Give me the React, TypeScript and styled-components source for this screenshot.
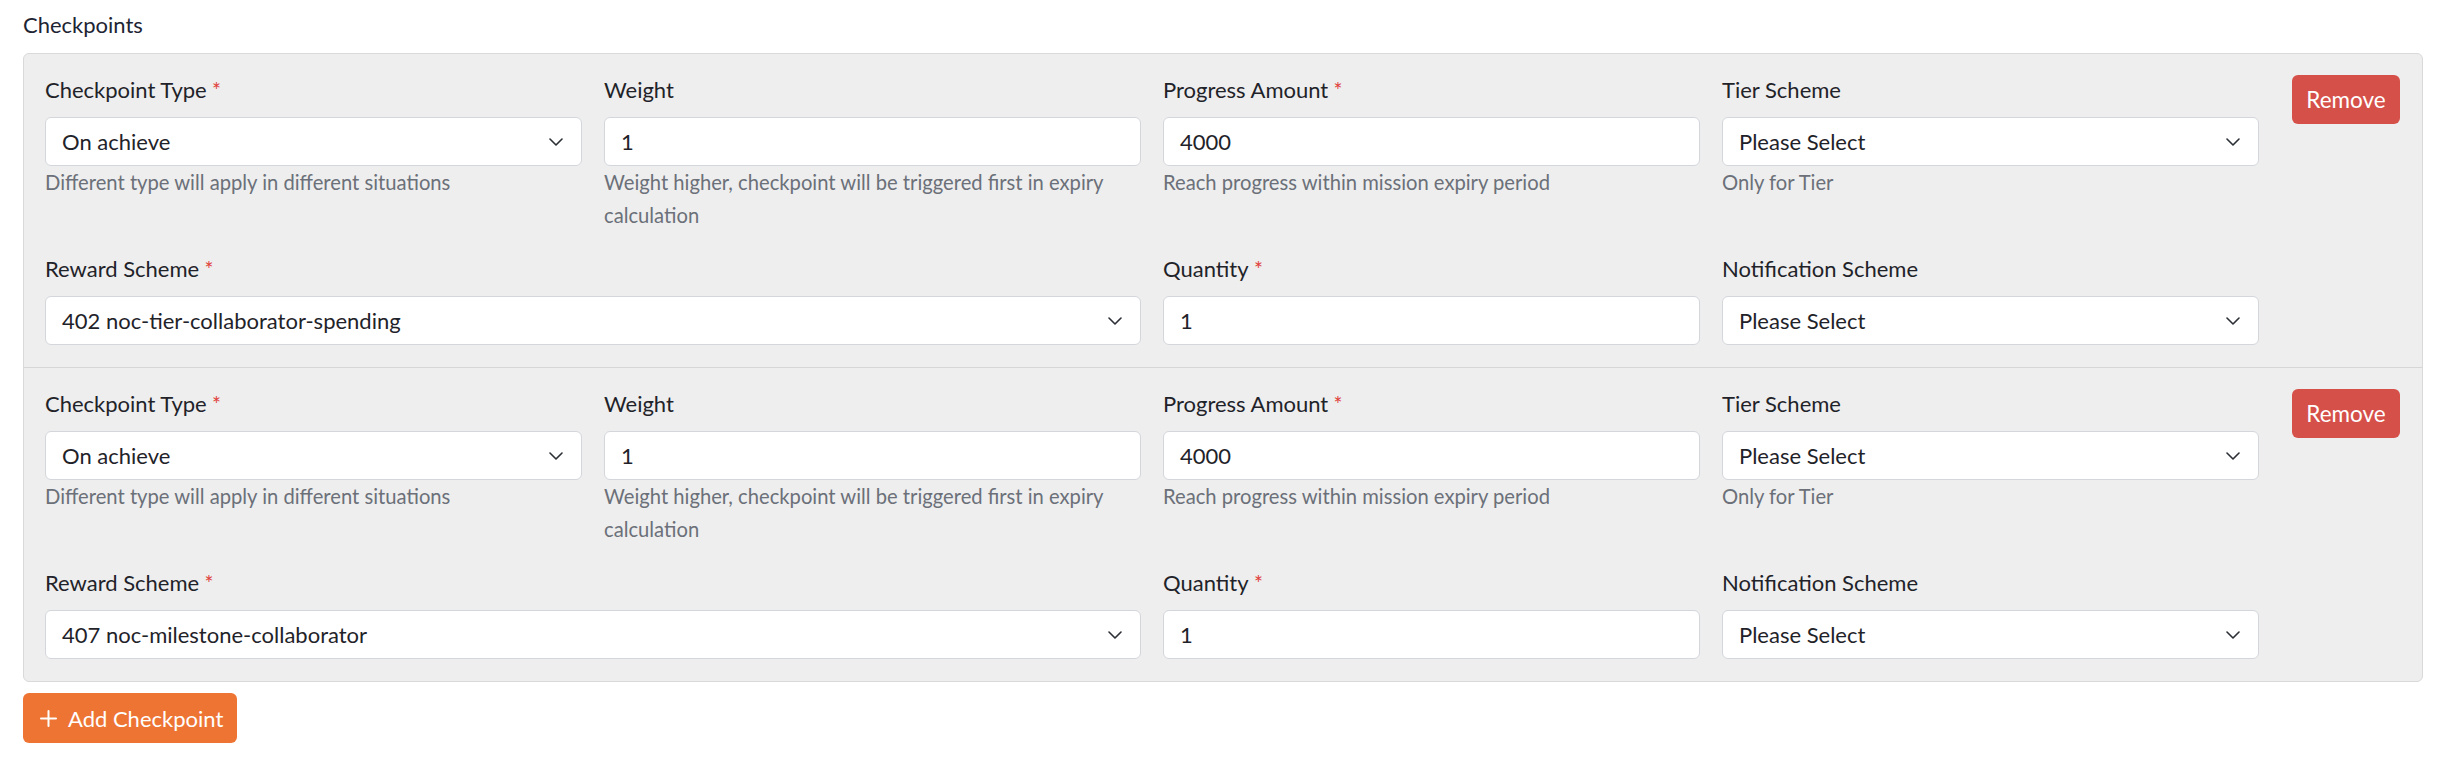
import React from 'react';
import styled, { createGlobalStyle } from 'styled-components';

const GlobalStyle = createGlobalStyle`
    html, body {
        margin: 0;
        padding: 0;
        background: #ffffff;
        font-family: Lato, 'Noto Sans', 'Liberation Sans', sans-serif;
    }
`;

interface Field {
    label: string;
    required?: boolean;
    value: string;
    select?: boolean;
    help?: string;
    span?: number;
}

interface Checkpoint {
    id: number;
    fields: Field[];
}

const checkpoints: Checkpoint[] = [
    {
        id: 1,
        fields: [
            { label: 'Checkpoint Type', required: true, value: 'On achieve', select: true, help: 'Different type will apply in different situations' },
            { label: 'Weight', value: '1', help: 'Weight higher, checkpoint will be triggered first in expiry calculation' },
            { label: 'Progress Amount', required: true, value: '4000', help: 'Reach progress within mission expiry period' },
            { label: 'Tier Scheme', value: 'Please Select', select: true, help: 'Only for Tier' },
            { label: 'Reward Scheme', required: true, value: '402 noc-tier-collaborator-spending', select: true, span: 2 },
            { label: 'Quantity', required: true, value: '1' },
            { label: 'Notification Scheme', value: 'Please Select', select: true },
        ],
    },
    {
        id: 2,
        fields: [
            { label: 'Checkpoint Type', required: true, value: 'On achieve', select: true, help: 'Different type will apply in different situations' },
            { label: 'Weight', value: '1', help: 'Weight higher, checkpoint will be triggered first in expiry calculation' },
            { label: 'Progress Amount', required: true, value: '4000', help: 'Reach progress within mission expiry period' },
            { label: 'Tier Scheme', value: 'Please Select', select: true, help: 'Only for Tier' },
            { label: 'Reward Scheme', required: true, value: '407 noc-milestone-collaborator', select: true, span: 2 },
            { label: 'Quantity', required: true, value: '1' },
            { label: 'Notification Scheme', value: 'Please Select', select: true },
        ],
    },
];

const Page = styled.div`
    padding: 10px 17px 20px 23px;
`;

const Title = styled.div`
    font-size: 22px;
    line-height: 30px;
    color: #1d2433;
    margin-bottom: 13px;
`;

const List = styled.div`
    background: #eeeeee;
    border: 1px solid #d9d9d9;
    border-radius: 6px;
    overflow: hidden;
`;

const Card = styled.div`
    display: flex;
    align-items: flex-start;
    padding: 21px 22px 22px 21px;
    border-bottom: 1px solid #d6d6d6;

    &:last-child {
        border-bottom: none;
    }
`;

const Grid = styled.div`
    flex: 1;
    display: grid;
    grid-template-columns: repeat(4, 1fr);
    column-gap: 22px;
    row-gap: 22px;
`;

const FieldBox = styled.div<{ $span?: number }>`
    display: flex;
    flex-direction: column;
    min-width: 0;
    grid-column: span ${(p) => p.$span || 1};
`;

const Label = styled.label`
    font-size: 22px;
    line-height: 30px;
    color: #1f2329;
    margin-bottom: 12px;

    span {
        color: #e0413a;
        font-size: 21px;
    }
`;

const Control = styled.div`
    height: 49px;
    box-sizing: border-box;
    display: flex;
    align-items: center;
    justify-content: space-between;
    padding: 0 18px 0 16px;
    background: #ffffff;
    border: 1px solid #d3d6db;
    border-radius: 6px;
    font-size: 22px;
    color: #1f2329;
`;

const Help = styled.div`
    font-size: 20.2px;
    line-height: 33px;
    color: #6b7079;
`;

const RemoveButton = styled.button`
    flex: none;
    margin-left: 33px;
    width: 108px;
    height: 49px;
    border: none;
    border-radius: 6px;
    background: #d6504a;
    color: #ffffff;
    font-family: inherit;
    font-size: 22.5px;
    cursor: pointer;
`;

const AddButton = styled.button`
    margin-top: 11px;
    height: 50px;
    display: inline-flex;
    align-items: center;
    gap: 11px;
    padding: 0 14px 0 17px;
    border: none;
    border-radius: 6px;
    background: #ee7433;
    color: #ffffff;
    font-family: inherit;
    font-size: 22px;
    cursor: pointer;
`;

const Chevron = () => (
    <svg width="14" height="8" viewBox="0 0 14 8" fill="none">
        <path d="M1 1l6 6 6-6" stroke="#2b2f36" strokeWidth="1.6" strokeLinecap="round" strokeLinejoin="round" />
    </svg>
);

const Plus = () => (
    <svg width="17" height="17" viewBox="0 0 17 17" fill="none">
        <path d="M8.5 1v15M1 8.5h15" stroke="#ffffff" strokeWidth="2" strokeLinecap="round" />
    </svg>
);

const App = () => (
    <Page>
        <GlobalStyle />
        <Title>Checkpoints</Title>
        <List>
            {checkpoints.map((cp) => (
                <Card key={cp.id}>
                    <Grid>
                        {cp.fields.map((f) => (
                            <FieldBox key={f.label} $span={f.span}>
                                <Label>
                                    {f.label}
                                    {f.required && <span> *</span>}
                                </Label>
                                <Control>
                                    {f.value}
                                    {f.select && <Chevron />}
                                </Control>
                                {f.help && <Help>{f.help}</Help>}
                            </FieldBox>
                        ))}
                    </Grid>
                    <RemoveButton>Remove</RemoveButton>
                </Card>
            ))}
        </List>
        <AddButton>
            <Plus />
            Add Checkpoint
        </AddButton>
    </Page>
);

export default App;
